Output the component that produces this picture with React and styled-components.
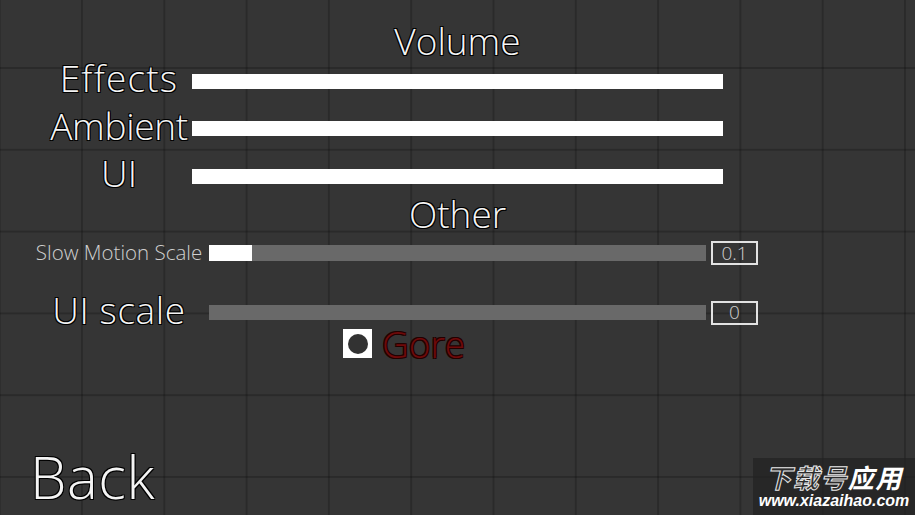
import React from "react";
import styled, { createGlobalStyle } from "styled-components";

const GlobalStyle = createGlobalStyle`
    html, body {
        margin: 0;
        padding: 0;
        background: #353535;
    }
    * {
        box-sizing: border-box;
    }
`;

const outline = (c) => `-1px -1px 0 ${c}, 1px -1px 0 ${c}, -1px 1px 0 ${c}, 1px 1px 0 ${c}, 0 0 1px ${c}`;

const Screen = styled.main`
    position: relative;
    width: 915px;
    height: 515px;
    overflow: hidden;
    display: flex;
    flex-direction: column;
    padding-top: 23px;
    font-family: "Open Sans", "Liberation Sans", sans-serif;
    font-weight: 300;
    color: #f4f4f4;
    background-color: #353535;
    background-image:
        linear-gradient(to right, rgba(0, 0, 0, 0.2) 2px, transparent 2px),
        linear-gradient(to bottom, rgba(0, 0, 0, 0.2) 2px, transparent 2px);
    background-size: 82.3px 81.8px;
    background-position: 81px 67px;
`;

const Title = styled.h2`
    margin: 0;
    height: 36px;
    font-size: 37px;
    line-height: 36px;
    font-weight: 300;
    text-align: center;
    text-shadow: ${outline("#000")};
`;

const VolumeList = styled.div`
    margin-top: 2px;
    display: flex;
    flex-direction: column;
    gap: 7.5px;
`;

const VolumeRow = styled.div`
    height: 40px;
    display: flex;
    align-items: center;
    padding-left: 50px;
    gap: 4px;
`;

const Label = styled.span`
    width: ${(p) => p.$w}px;
    flex: none;
    text-align: center;
    white-space: nowrap;
    font-size: ${(p) => (p.$small ? 20.5 : 37)}px;
    letter-spacing: ${(p) => p.$ls || 0}px;
    line-height: 40px;
    padding-bottom: ${(p) => (p.$small ? 3 : 6)}px;
    color: ${(p) => (p.$small ? "#cfcfcf" : "#f4f4f4")};
    text-shadow: ${(p) => (p.$small ? "none" : outline("#000"))};
`;

const FullBar = styled.div`
    width: 531px;
    height: 15px;
    background: #ffffff;
`;

const SliderRow = styled.div`
    height: 30px;
    margin-top: ${(p) => p.$top}px;
    display: flex;
    align-items: center;
    padding-left: 30px;
`;

const Track = styled.div`
    margin-left: 1px;
    width: 497px;
    height: ${(p) => p.$h}px;
    background: #696969;
    display: flex;
`;

const Fill = styled.div`
    height: 100%;
    background: #ffffff;
`;

const ValueBox = styled.div`
    margin-left: 5px;
    width: 47px;
    height: 24px;
    border: 2px solid #e2e2e2;
    display: flex;
    align-items: center;
    justify-content: center;
    font-size: 19px;
    color: #cfcfcf;
    line-height: 1;
`;

const ToggleRow = styled.div`
    height: 30px;
    margin-top: 1px;
    display: flex;
    align-items: center;
    padding-left: 343px;
    gap: 10px;
`;

const Check = styled.div`
    width: 29px;
    height: 29px;
    background: #ffffff;
    display: flex;
    align-items: center;
    justify-content: center;

    &::after {
        content: "";
        width: 20px;
        height: 20px;
        border-radius: 50%;
        background: #323232;
    }
`;

const ToggleText = styled.span`
    font-size: 37px;
    line-height: 30px;
    color: #6e0a0a;
    text-shadow: ${outline("#220000")};
`;

const BackButton = styled.button`
    margin-top: auto;
    margin-bottom: 8px;
    align-self: flex-start;
    margin-left: 30px;
    padding: 0;
    border: none;
    background: none;
    font-family: inherit;
    font-weight: 300;
    font-size: 58px;
    letter-spacing: 0.6px;
    line-height: 60px;
    color: #f4f4f4;
    text-shadow: ${outline("#000")};
`;

const Watermark = styled.div`
    position: absolute;
    right: 0;
    bottom: 0;
    width: 162px;
    height: 57px;
    background: rgba(34, 34, 34, 0.7);
    display: flex;
    flex-direction: column;
    align-items: center;
    padding-top: 6px;
    gap: 2px;
    font-family: "Noto Sans CJK SC", "Liberation Sans", sans-serif;
    font-weight: 700;
    font-style: italic;
`;

const MarkTitle = styled.div`
    font-size: 26px;
    line-height: 26px;
    height: 26px;
    letter-spacing: 1.5px;
    color: #ffffff;

    & > span {
        color: #2c2c2c;
        -webkit-text-stroke: 1px #e8e8e8;
    }
`;

const MarkUrl = styled.div`
    font-family: "Liberation Sans", sans-serif;
    font-size: 16px;
    line-height: 17px;
    height: 17px;
    color: #ffffff;
`;

const volumes = [
    { name: "Effects", ls: 1.2 },
    { name: "Ambient", ls: -0.3 },
    { name: "UI", ls: 0 },
];

export default function App() {
    return (
        <>
            <GlobalStyle />
            <Screen>
                <Title>Volume</Title>
                <VolumeList>
                    {volumes.map((v) => (
                        <VolumeRow key={v.name}>
                            <Label $w={138} $ls={v.ls}>{v.name}</Label>
                            <FullBar />
                        </VolumeRow>
                    ))}
                </VolumeList>
                <Title>Other</Title>
                <SliderRow $top={6}>
                    <Label $w={178} $small>Slow Motion Scale</Label>
                    <Track $h={16}>
                        <Fill style={{ width: `${(0.1 / 1.15) * 100}%` }} />
                    </Track>
                    <ValueBox>0.1</ValueBox>
                </SliderRow>
                <SliderRow $top={29.5}>
                    <Label $w={178} $ls={0.6}>UI scale</Label>
                    <Track $h={15} />
                    <ValueBox>0</ValueBox>
                </SliderRow>
                <ToggleRow>
                    <Check />
                    <ToggleText>Gore</ToggleText>
                </ToggleRow>
                <BackButton>Back</BackButton>
                <Watermark>
                    <MarkTitle><span>下载号</span>应用</MarkTitle>
                    <MarkUrl>www.xiazaihao.com</MarkUrl>
                </Watermark>
            </Screen>
        </>
    );
}
